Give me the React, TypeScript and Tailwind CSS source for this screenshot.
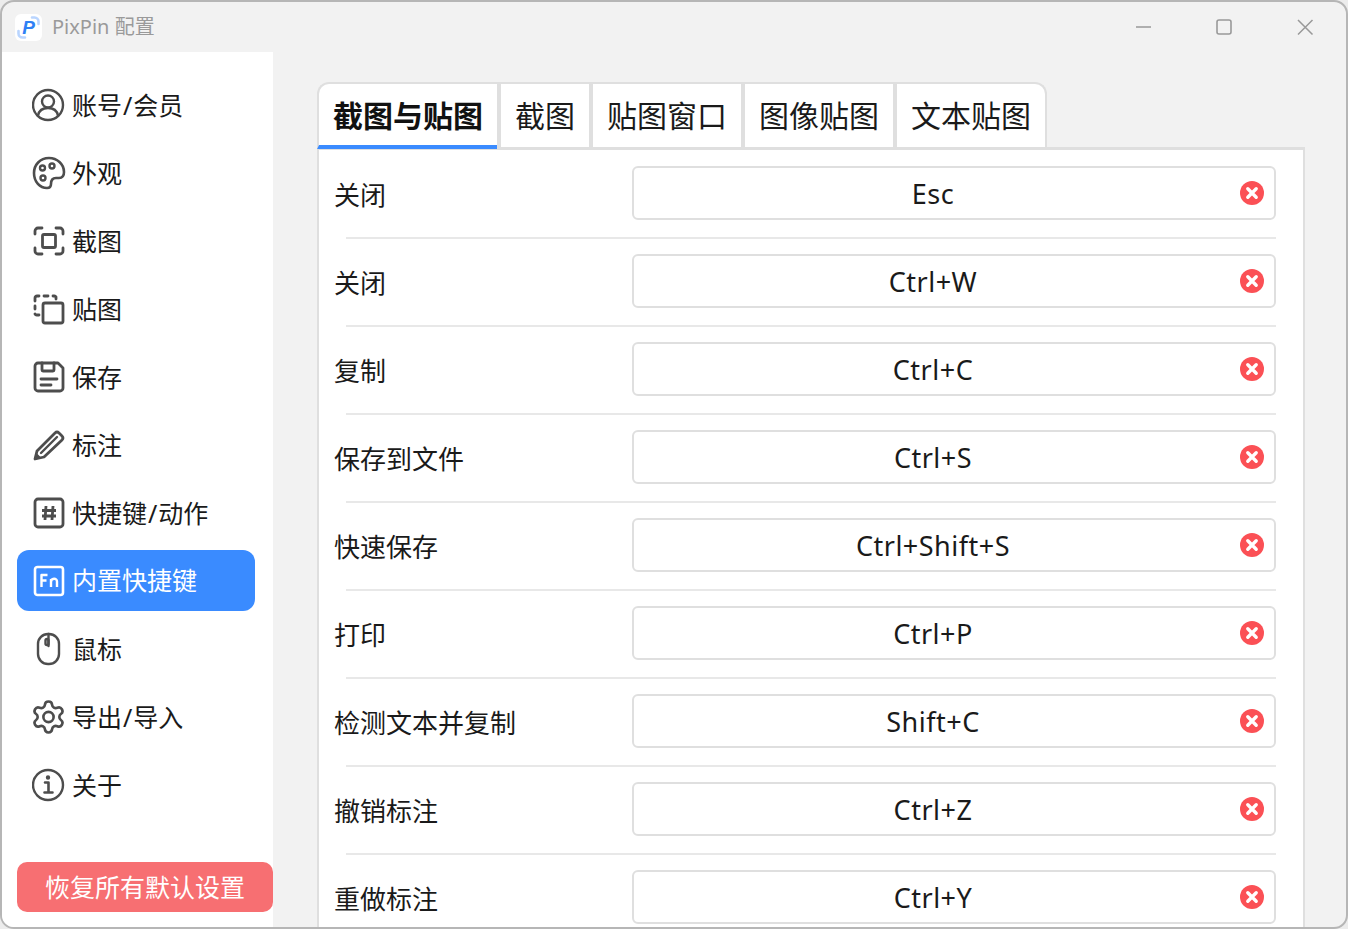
import type { ReactNode } from 'react';

const font = { fontFamily: '"Noto Sans", "Noto Sans CJK SC", sans-serif' };

const Icon = ({ children, color = '#4d4d4d' }: { children: ReactNode; color?: string }) => (
  <svg width="34" height="34" viewBox="0 0 34 34" fill="none" stroke={color} strokeWidth="2.4" strokeLinecap="round" strokeLinejoin="round" className="shrink-0">
    {children}
  </svg>
);

const navItems: { label: string; active?: boolean; icon: ReactNode }[] = [
  {
    label: '账号/会员',
    icon: (
      <>
        <circle cx="16" cy="17" r="15" />
        <circle cx="16" cy="13.5" r="6" />
        <path d="M6 27.500c1-5 5-7.500 10-7.500s9 2.500 10 7.500" />
      </>
    ),
  },
  {
    label: '外观',
    icon: (
      <>
        <path d="M17 2C8 2 2 9 2 17c0 9 6 15 13 15 3 0 4-2 4-4 0-3 1-6 5-6h3c3 0 5-2 5-6C32 8 25 2 17 2z" strokeWidth="2.600" />
        <circle cx="20" cy="10" r="2.500" />
        <circle cx="10.500" cy="12" r="2.500" />
        <circle cx="11" cy="22" r="2.500" />
      </>
    ),
  },
  {
    label: '截图',
    icon: (
      <>
        <path d="M10 4H6a3 3 0 0 0-3 3v3M24 4h4a3 3 0 0 1 3 3v3M3 24v3a3 3 0 0 0 3 3h4M31 24v3a3 3 0 0 1-3 3h-4" strokeWidth="2.800" />
        <rect x="10.500" y="10.500" width="13" height="13" rx="1.500" strokeWidth="2.800" />
      </>
    ),
  },
  {
    label: '贴图',
    icon: (
      <>
        <path d="M3 9V6a2 2 0 0 1 2-2h2M12 4h4M21 4h1a2 2 0 0 1 2 1v2M3 14v3M3 22a2 2 0 0 0 2 1h2" strokeWidth="2.800" />
        <rect x="11" y="11" width="20" height="20" rx="2" strokeWidth="2.800" />
      </>
    ),
  },
  {
    label: '保存',
    icon: (
      <>
        <path d="M6 3h20l5 5v20a3 3 0 0 1-3 3H6a3 3 0 0 1-3-3V6a3 3 0 0 1 3-3z" strokeWidth="2.800" />
        <path d="M10 3v7a1 1 0 0 0 1 1h10a1 1 0 0 0 1-1V3M9 19h16M9 25h10" strokeWidth="2.800" />
      </>
    ),
  },
  {
    label: '标注',
    icon: (
      <>
        <path d="M3 31l2-8L23 5q2-2 4 0l3 3q2 2 0 4L12 29z" strokeWidth="2.800" />
        <path d="M9 25L25 9" strokeWidth="2.400" />
        <path d="M3 31l1.500-5 3.500 3.500z" fill="#4d4d4d" strokeWidth="1.500" />
      </>
    ),
  },
  {
    label: '快捷键/动作',
    icon: (
      <>
        <rect x="3" y="3" width="28" height="28" rx="3" strokeWidth="2.800" />
        <path d="M14 10l-1 14M21 10l-1 14M10 14.500h14M10 20h14" strokeWidth="2.800" strokeLinecap="butt" />
      </>
    ),
  },
  {
    label: '内置快捷键',
    active: true,
    icon: (
      <>
        <rect x="3" y="3" width="28" height="28" rx="2.500" strokeWidth="2.600" />
        <path d="M9.500 23V11h6M9.500 16.500h5M19 23v-8M19 18c0-4 6-4.500 6-.5V23" strokeWidth="2.400" strokeLinecap="butt" />
      </>
    ),
  },
  {
    label: '鼠标',
    icon: (
      <>
        <rect x="6" y="2" width="21" height="30" rx="10" />
        <path d="M16.500 2v12" />
        <rect x="13.500" y="7" width="3" height="6" rx="1.500" />
      </>
    ),
  },
  {
    label: '导出/导入',
    icon: (
      <>
        <g transform="translate(-2.100 -1.600) scale(1.55)" strokeWidth="1.700">
          <path d="M9.671 4.136a2.340 2.340 0 0 1 4.659 0 2.340 2.340 0 0 0 3.319 1.915 2.340 2.340 0 0 1 2.330 4.033 2.340 2.340 0 0 0 0 3.831 2.340 2.340 0 0 1-2.330 4.033 2.340 2.340 0 0 0-3.319 1.915 2.340 2.340 0 0 1-4.659 0 2.340 2.340 0 0 0-3.320-1.915 2.340 2.340 0 0 1-2.330-4.033 2.340 2.340 0 0 0 0-3.831A2.340 2.340 0 0 1 6.350 6.051a2.340 2.340 0 0 0 3.319-1.915" />
          <circle cx="12" cy="12" r="3.300" />
        </g>
      </>
    ),
  },
  {
    label: '关于',
    icon: (
      <>
        <circle cx="16" cy="17" r="15" />
        <path d="M13 14.500h3.500V24M12.500 24.500h8" strokeWidth="2.600" />
        <circle cx="16" cy="9.500" r="1" fill="#4d4d4d" />
      </>
    ),
  },
];

const tabs = ['截图与贴图', '截图', '贴图窗口', '图像贴图', '文本贴图'];

const rows = [
  ['关闭', 'Esc'],
  ['关闭', 'Ctrl+W'],
  ['复制', 'Ctrl+C'],
  ['保存到文件', 'Ctrl+S'],
  ['快速保存', 'Ctrl+Shift+S'],
  ['打印', 'Ctrl+P'],
  ['检测文本并复制', 'Shift+C'],
  ['撤销标注', 'Ctrl+Z'],
  ['重做标注', 'Ctrl+Y'],
];

const ClearIcon = () => (
  <svg width="24" height="24" viewBox="0 0 24 24" className="shrink-0">
    <circle cx="12" cy="12" r="12" fill="#fb5055" />
    <path d="M7.800 7.800l8.400 8.400M16.200 7.800l-8.400 8.400" stroke="#fff" strokeWidth="3.400" strokeLinecap="round" />
  </svg>
);

const AppLogo = () => (
  <div className="w-[27px] h-[27px] rounded-md bg-white flex items-center justify-center relative shrink-0">
    <svg width="27" height="27" viewBox="0 0 27 27" fill="none" stroke="#b9d5ff" strokeWidth="2.600" strokeLinecap="round" className="absolute inset-0">
      <path d="M17 3.500h2.500a4 4 0 0 1 4 4V10M3.500 17v2.500a4 4 0 0 0 4 4H10" />
    </svg>
    <span className="relative text-[19px] leading-none font-black italic text-[#2f80f5]" style={{ fontFamily: '"Liberation Sans", sans-serif' }}>P</span>
  </div>
);

// the slash sits a little wider in the reference
const NavLabel = ({ text }: { text: string }) => {
  const [a, b] = text.split('/');
  if (b === undefined) return <span>{text}</span>;
  return (
    <span>
      {a}
      <span className="mx-px">/</span>
      {b}
    </span>
  );
};

export default function App() {
  return (
    <div className="w-[1348px] h-[929px] bg-[#ececec] overflow-hidden" style={font}>
      <div className="h-full flex flex-col bg-[#f2f2f2] border-2 border-[#b6b6b6] rounded-[14px] overflow-hidden">
        {/* title bar */}
        <div className="h-[50px] shrink-0 flex items-center pl-[13px] text-[#9a9a9a]">
          <AppLogo />
          <span className="ml-[10px] text-[20px] leading-none">PixPin 配置</span>
          <div className="ml-auto flex items-center">
            <svg width="80" height="20" viewBox="0 0 80 20" fill="none" stroke="#999" strokeWidth="1.500">
              <path d="M32 10h15" />
            </svg>
            <svg width="80" height="20" viewBox="0 0 80 20" fill="none" stroke="#999" strokeWidth="1.600">
              <rect x="33" y="3" width="14" height="14" rx="2" />
            </svg>
            <svg width="80" height="20" viewBox="0 0 80 20" fill="none" stroke="#999" strokeWidth="1.500" className="mr-[2px]">
              <path d="M34 3l14.500 14.500M48.500 3L34 17.500" />
            </svg>
          </div>
        </div>

        <div className="flex-1 flex min-h-0">
          {/* sidebar */}
          <aside className="w-[271px] shrink-0 bg-white flex flex-col pl-[15px] pt-[19px] pb-[15px]">
            <nav className="flex flex-col">
              {navItems.map((item) => (
                <div
                  key={item.label}
                  className={`w-[238px] flex items-center pl-[15px] gap-[6px] text-[25px] leading-none ${
                    item.active ? 'h-[61px] mt-[3px] mb-[4px] rounded-[12px] bg-[#3a8bff] text-white' : 'h-[60px] my-[4px] text-[#1a1a1a]'
                  }`}
                >
                  <Icon color={item.active ? '#ffffff' : '#4d4d4d'}>{item.icon}</Icon>
                  <NavLabel text={item.label} />
                </div>
              ))}
            </nav>
            <button className="mt-auto h-[50px] w-[256px] rounded-[10px] bg-[#f76f72] text-white text-[25px] leading-none">
              恢复所有默认设置
            </button>
          </aside>

          {/* content */}
          <main className="flex-1 min-w-0 pl-[44px] pr-[41px] pt-[30px] overflow-hidden">
            <div className="flex h-[65px] items-start">
              {tabs.map((tab, i) => (
                <div
                  key={tab}
                  className={`flex items-center bg-white border-t-2 border-[#dfdfdf] text-[30px] leading-none ${
                    i === 0
                      ? 'relative z-10 h-[67px] w-[180px] justify-center pt-[3px] font-bold text-[#111] rounded-tl-[12px] border-l-2 border-b-4 border-b-[#3a8bff]'
                      : 'h-[65px] text-[#1a1a1a] border-l-4 px-[14px]'
                  } ${i === tabs.length - 1 ? 'rounded-tr-[12px] border-r-2' : ''}`}
                >
                  {tab}
                </div>
              ))}
            </div>
            <div className="bg-white border-2 border-t-[3px] border-[#dfdfdf] pl-[15px] pr-[27px] pt-[16px] pb-[40px]">
              {rows.map(([label, keys], i) => (
                <div key={i}>
                  {i > 0 && <div className="h-[2px] ml-[12px] mt-[17px] mb-[15px] bg-[#e8e8e8]" />}
                  <div className="flex items-center">
                    <span className="w-[298px] shrink-0 text-[26px] leading-none text-[#1a1a1a] pt-[4px]">{label}</span>
                    <div className="flex-1 h-[54px] flex items-center rounded-[6px] border-2 border-[#dfdfdf] pr-[10px]">
                      <span className="flex-1 text-center text-[27px] leading-none tracking-[0.5px] text-[#1a1a1a] pr-[8px]">{keys}</span>
                      <ClearIcon />
                    </div>
                  </div>
                </div>
              ))}
            </div>
          </main>
        </div>
      </div>
    </div>
  );
}
